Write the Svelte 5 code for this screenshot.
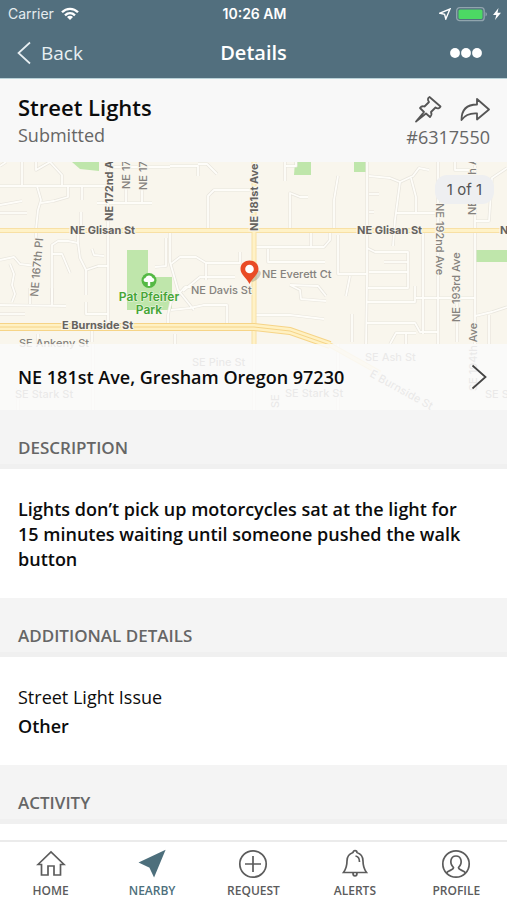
<script>
  const tabs = ['Home', 'Nearby', 'Request', 'Alerts', 'Profile'];
  let active = $state('Nearby');

  // Minor streets, drawn twice: a grey casing and a white centre line
  const streets = [
    'M0 186H108', 'M22 162V186', 'M0 166L6 162', 'M36 162V170L50 162L62 175V186',
    'M37 186L41 200L38 210L36 229V240', 'M41 203L54 201L68 197V186', 'M82 186V200', 'M81 212V230',
    'M0 205L22 201', 'M0 213H27', 'M108 162V230', 'M108 167H170', 'M97 203H152', 'M126 185V202', 'M142 188V202',
    'M108 230V328', 'M0 260L14 257L20 264L36 266', 'M10 264L14 274L12 285L15 294L12 302', 'M52 302V245L58 241H68L78 243V232',
    'M78 243L80 258L86 270L98 266H108', 'M52 254H62L70 273', 'M92 249L94 255L104 256', 'M86 270V295', 'M170 230V262L178 290L194 310',
    'M155 267L166 266V238', 'M0 305L66 306', 'M0 314H25', 'M30 304V288', 'M52 288V305', 'M86 302V314H108', 'M92 342V330', 'M38 334V344', 'M175 334V344',
    'M168 327V315L171 302L185 287H192', 'M171 310L190 308L204 305H227V327', 'M170 166H198V176', 'M198 164H207L217 174',
    'M208 230V196L214 190H250', 'M290 230V193L300 197L308 197', 'M285 162V181', 'M338 176L334 200V230', 'M296 162V166H286',
    'M254 247H324L330 240V232', 'M268 258V249', 'M268 258V262H325', 'M171 264L180 257H196L206 263H240V252', 'M206 263V280', 'M183 291L200 277H235',
    'M311 230V247', 'M290 285L300 290L301 299L326 301', 'M290 285L318 286L326 296', 'M254 315H290L324 319', 'M352 314V342',
    'M367 162V282L366 344', 'M369 176L390 178L400 182L413 176L419 168L429 170', 'M411 178L416 197V212', 'M400 182L395 220L393 246', 'M369 194H379', 'M369 212H374',
    'M396 213H437', 'M438 162V344', 'M455 162V170H470', 'M475 162V344', 'M475 221H489L492 178L507 168', 'M367 248L375 252H408V288H368',
    'M408 262H384', 'M369 272H408', 'M423 232V334', 'M416 298H475', 'M367 302H415V286', 'M367 323H415L420 332H438', 'M390 344L396 333H416',
    'M338 235V274H367', 'M350 276L346 296', 'M475 316L492 312L507 307', 'M489 315V344', 'M457 300V342', 'M406 334V344',
    'M254 344V410', 'M93 344V410', 'M338 344V410', 'M18 388V410'
  ];
  const avenues = ['M0 230.500H507', 'M254 162V344', 'M0 327H254L290 331L330 345L380 373'];
</script>

{#snippet icon(name)}
  <svg class="tab-icon" viewBox="0 0 30 30" aria-hidden="true">
    {#if name === 'Home'}
      <path d="M2 15.500L15 3L28 15.500H24.500V26H18V17H12V26H5.500V15.500Z" />
    {:else if name === 'Nearby'}
      <path class="solid" d="M27 2.500L17 26.500L13 18L3.500 13.500Z" />
    {:else if name === 'Request'}
      <circle cx="15" cy="15" r="13.200" /><path d="M15 7V23M7 15H23" />
    {:else if name === 'Alerts'}
      <path d="M13 3.500C13 1 17 1 17 3.500C21.500 5 23 8 23 12C23 18 24 20 26.500 23.500H3.500C6 20 7 18 7 12C7 8 8.500 5 13 3.500ZM13 24C13 28 17 28 17 24M15.500 7C18.500 7.500 19.500 9.500 19.500 13" />
    {:else}
      <circle cx="15" cy="15" r="13.200" />
      <path d="M5.500 24C7 21 12.500 21.500 12.500 18.500C8 14 9.500 7 15 7C20.500 7 22 14 17.500 18.500C17.500 21.500 23 21 24.500 24" />
    {/if}
  </svg>
{/snippet}

<div class="app">
  <header class="top">
    <div class="status">
      <div class="carrier">
        <span>Carrier</span>
        <svg width="18" height="14" viewBox="0 0 18 14" fill="none" stroke="#fff" stroke-width="2.300" aria-hidden="true">
          <path d="M1 5.300C5.500 .6 12.500 .6 17 5.300M4 8.400C7 5.500 11 5.500 14 8.400" /><path d="M9 13L6 10C7.800 8.400 10.200 8.400 12 10Z" fill="#fff" stroke="none" />
        </svg>
      </div>
      <strong>10:26 AM</strong>
      <div class="power">
        <svg width="12" height="12" viewBox="0 0 12 12" fill="none" stroke="#fff" stroke-width="1.400" aria-hidden="true"><path d="M11 1L6.800 11L5.600 6.400L1 5.200Z" /></svg>
        <svg width="32" height="15" viewBox="0 0 32 15" aria-hidden="true"><rect x=".7" y=".7" width="27.500" height="13" rx="3" fill="none" stroke="#91a5ae" stroke-width="1.300" /><rect x="2.500" y="2.500" width="24" height="9.500" rx="1.500" fill="#4cd964" /><path d="M29.500 5C31.500 6 31.500 8.500 29.500 9.500Z" fill="#91a5ae" /></svg>
        <svg width="8" height="12" viewBox="0 0 8 12" aria-hidden="true"><path d="M5.500 0L0 7H3.300L2 12L8 4.700H4.500Z" fill="#fff" /></svg>
      </div>
    </div>
    <nav class="bar">
      <button class="back">
        <svg width="14" height="24" viewBox="0 0 14 24" fill="none" stroke="currentColor" stroke-width="1.700" aria-hidden="true"><path d="M13 1.500L1.500 12L13 22.500" /></svg>
        Back
      </button>
      <h1>Details</h1>
      <button class="more" aria-label="More options">
        <svg width="32" height="10" viewBox="0 0 32 10" fill="currentColor" aria-hidden="true"><circle cx="5" cy="5" r="4.900" /><circle cx="16" cy="5" r="4.900" /><circle cx="27" cy="5" r="4.900" /></svg>
      </button>
    </nav>
  </header>

  <main>
    <section class="summary">
      <div>
        <h2>Street Lights</h2>
        <p>Submitted</p>
      </div>
      <div class="side">
        <div class="actions">
          <button aria-label="Pin">
            <svg width="28" height="28" viewBox="0 0 28 28" aria-hidden="true"><path d="M15.500 2C13.500 3 13.500 5 15 7L10.500 11.500C8.500 10.800 7 11.500 6 13L10 17L2 26.500L12 18.500L16 22C17.500 20.500 18 19 17 17L21.500 12.500C23.500 14 25.500 13.500 26.500 11.500Z" /></svg>
          </button>
          <button aria-label="Share">
            <svg width="30" height="28" viewBox="0 0 30 28" aria-hidden="true"><path d="M1.500 25C1.500 14 8 9.500 17 9.500V4L29 14.500L17 24.500V18.500C10 18 5.500 19.500 1.500 25Z" /></svg>
          </button>
        </div>
        <p>#6317550</p>
      </div>
    </section>

    <section class="map">
      <svg class="canvas" viewBox="0 162 507 248" preserveAspectRatio="xMidYMid slice" role="img" aria-label="Map of NE 181st Ave">
        <rect y="162" width="507" height="248" fill="#f9f6ed" />
        <g fill="#bfe6ab">
          <path d="M72 162H99V171L80 169Z" /><path d="M127 250H148V277H172V310H127Z" />
          <path d="M295 162H311V175H294Z" /><path d="M354 162H367V172H354Z" /><path d="M475 250H507V262H475Z" />
        </g>
        <g fill="none" stroke-linejoin="round">
          <g stroke="#e8e5dd" stroke-width="3.200">{#each streets as d}<path {d} />{/each}</g>
          <g stroke="#fefdf9" stroke-width="1.800">{#each streets as d}<path {d} />{/each}</g>
          <g stroke="#f8e0a5" stroke-width="5">{#each avenues as d}<path {d} />{/each}</g>
          <g stroke="#fff2c7" stroke-width="3">{#each avenues as d}<path {d} />{/each}</g>
          <path d="M0 327H254L290 331L330 345" stroke="#f6d487" stroke-width="8" />
          <path d="M0 327H254L290 331L330 345" stroke="#fff1c3" stroke-width="6" />
          <path d="M0 327H254L290 331L330 345" stroke="#f6d487" stroke-width="1" />
        </g>
        <g class="label">
          <g class="major">
            <text x="70" y="234">NE Glisan St</text><text x="357" y="234">NE Glisan St</text><text x="500" y="234">NE Glisan St</text>
            <text x="62" y="329">E Burnside St</text>
            <text transform="translate(113 221) rotate(-90)">NE 172nd Ave</text>
            <text transform="translate(258 231) rotate(-90)">NE 181st Ave</text>
          </g>
          <text x="262" y="278">NE Everett Ct</text><text x="191" y="294">NE Davis St</text>
          <text transform="translate(130 189) rotate(-90)">NE 173rd Ave</text>
          <text transform="translate(147 190) rotate(-90)">NE 174th Ave</text>
          <text transform="translate(38 297) rotate(-85)">NE 167th Pl</text>
          <text transform="translate(436 203) rotate(90)">NE 192nd Ave</text>
          <text transform="translate(460 322) rotate(-90)">NE 193rd Ave</text>
          <text transform="translate(476 215) rotate(-90)">NE 194th Ave</text>
          <text transform="translate(477 391) rotate(-90)">SE 194th Ave</text>
          <text x="19" y="347">SE Ankeny St</text><text x="192" y="366">SE Pine St</text><text x="365" y="361">SE Ash St</text>
          <text x="15" y="398">SE Stark St</text><text x="285" y="397">SE Stark St</text><text x="485" y="398">SE Stark St</text>
          <text transform="translate(369 376) rotate(29)">E Burnside St</text>
          <text transform="translate(279 408) rotate(-90)">SE</text>
        </g>
        <g class="park"><text x="149" y="301">Pat Pfeifer</text><text x="149" y="314">Park</text></g>
        <circle cx="149" cy="280.500" r="7.500" fill="#54b944" />
        <path d="M147.800 286V282H146C143 282 143 278.500 145.500 278C146 274.500 152 274.500 152.500 278C155 278.500 155 282 152 282H150.200V286Z" fill="#fff" />
        <ellipse cx="255" cy="276" rx="7" ry="4" transform="rotate(-45 255 276)" fill="#776" opacity=".35" />
        <path d="M249.500 284C247 278 240.500 275 240.500 269C240.500 257.500 258.500 257.500 258.500 269C258.500 275 252 278 249.500 284Z" fill="#e94b25" />
        <circle cx="249.500" cy="269" r="4.300" fill="#fff" />
      </svg>
      <span class="count">1 of 1</span>
      <button class="address">
        <span>NE 181st Ave, Gresham Oregon 97230</span>
        <svg width="16" height="26" viewBox="0 0 16 26" fill="none" stroke="#444" stroke-width="1.800" aria-hidden="true"><path d="M1.500 1.500L14.500 13L1.500 24.500" /></svg>
      </button>
    </section>

    <h3>Description</h3>
    <section class="card">
      <p class="value">Lights don’t pick up motorcycles sat at the light for 15 minutes waiting until someone pushed the walk button</p>
    </section>
    <h3>Additional Details</h3>
    <section class="card">
      <dl><dt>Street Light Issue</dt><dd class="value">Other</dd></dl>
    </section>
    <h3>Activity</h3>
    <section class="card"></section>
  </main>

  <nav class="tabs" aria-label="Main">
    {#each tabs as tab}
      <button class:active={active === tab} onclick={() => (active = tab)}>
        {@render icon(tab)}
        <span>{tab}</span>
      </button>
    {/each}
  </nav>
</div>

<style>
  :global(body) { margin: 0; }
  .app { display: flex; flex-direction: column; height: 100vh; overflow: hidden; background: #fff; color: #0c0c0c; font-family: "Open Sans", sans-serif; }
  h1, h2, h3, p, dl, dd { margin: 0; }
  button { margin: 0; padding: 0; border: 0; background: none; color: inherit; font: inherit; cursor: pointer; }
  svg { display: block; flex: none; }
  .top { flex: none; background: #526f7e; color: #fff; border-bottom: 1px solid #b9d2d8; }
  .status { display: grid; grid-template-columns: 1fr auto 1fr; align-items: center; height: 28px; padding: 0 6px 0 8px; font: 14px/28px Inter, sans-serif; }
  .status strong { font-weight: 600; }
  .carrier, .power { display: flex; align-items: center; gap: 7px; }
  .carrier { color: #e5ecef; }
  .power { justify-content: flex-end; gap: 5px; }
  .bar { display: grid; grid-template-columns: 1fr auto 1fr; align-items: center; height: 50px; padding: 0 17px; }
  .back { display: flex; align-items: center; gap: 10px; justify-self: start; color: #e8eff2; font-size: 19px; }
  h1 { font-size: 20px; line-height: 28px; font-weight: 600; }
  .more { justify-self: end; padding-right: 8px; }
  main { flex: 1; min-height: 0; overflow: hidden; background: #f4f4f4; }
  .summary { display: flex; justify-content: space-between; height: 83px; box-sizing: border-box; padding: 14px 17px 0 18px; background: #f8f8f8; color: #666; font-size: 18px; line-height: 28px; }
  h2 { color: #0c0c0c; font-size: 22px; line-height: 28px; font-weight: 600; }
  .side { padding-top: 2px; text-align: right; }
  .actions { display: flex; justify-content: flex-end; gap: 18px; }
  .actions svg { fill: none; stroke: #555; stroke-width: 1.8; stroke-linejoin: round; }
  .map { position: relative; height: 248px; }
  .canvas { width: 100%; height: 100%; }
  .label { fill: #85827d; font: 500 11px Inter, sans-serif; stroke: #f9f6ed; stroke-width: 2px; paint-order: stroke; }
  .major { fill: #66635f; font-weight: 700; }
  .park { fill: #45a637; font: 600 12px Inter, sans-serif; text-anchor: middle; stroke: #f9f6ed; stroke-width: 1px; paint-order: stroke; }
  .count { position: absolute; top: 13px; right: 13px; padding: 0 12px; border-radius: 12px; background: #eeeff1; color: #555; font: 15px/29px Inter, sans-serif; }
  .address { position: absolute; inset: auto 0 0 0; display: flex; align-items: center; justify-content: space-between; height: 66px; padding: 0 20px 0 18px; background: rgba(250, 250, 250, .86); font-size: 18px; font-weight: 600; }
  h3 { height: 59px; box-sizing: border-box; padding: 26px 18px 0; border-bottom: 5px solid #f0f0f0; background: #f4f4f4; color: #666; font-size: 17px; line-height: 24px; font-weight: 600; text-transform: uppercase; }
  .card { min-height: 16px; background: #fff; font-size: 18px; line-height: 25px; }
  .card:has(*) { padding: 28px 32px 26px 18px; }
  .value { font-weight: 600; }
  dd { margin-top: 4px; }
  .tabs { flex: none; display: grid; grid-template-columns: repeat(5, 1fr); height: 60px; box-sizing: border-box; border-top: 2px solid #ebebeb; background: #fff; color: #5c5c5c; }
  .tabs button { display: flex; flex-direction: column; align-items: center; gap: 2px; padding-top: 7px; font-size: 12px; line-height: 20px; font-weight: 600; text-transform: uppercase; }
  .tab-icon { width: 30px; height: 30px; fill: none; stroke: currentColor; stroke-width: 1.7; }
  .solid { fill: currentColor; }
  .active { color: #4d6f7c; }
</style>
